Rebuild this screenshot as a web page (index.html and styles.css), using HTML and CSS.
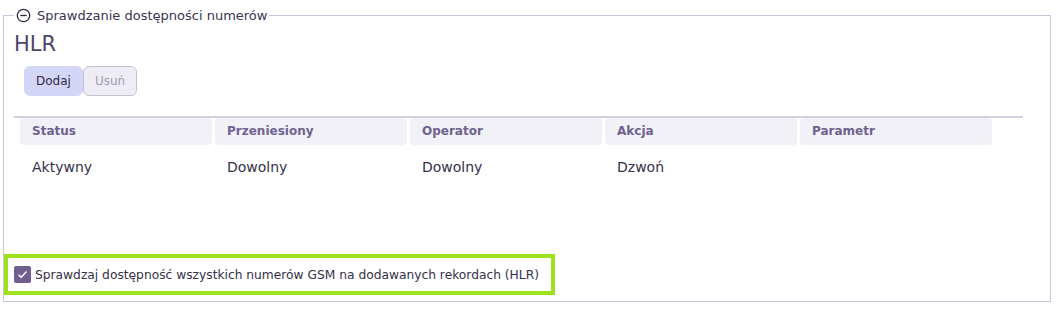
FILE: index.html
```html
<!DOCTYPE html>
<html lang="pl">

<head>
	<meta charset="UTF-8">
	<title>HLR</title>
	<link rel="stylesheet" href="styles.css">
</head>

<body>
	<fieldset class="panel">
		<legend>
			<svg class="toggle" width="15" height="15" viewBox="0 0 16 16">
				<circle cx="8" cy="8" r="6.6" fill="none" stroke="#2e2840" stroke-width="1.4"/>
				<line x1="4.6" y1="8" x2="11.4" y2="8" stroke="#2e2840" stroke-width="1.4"/>
			</svg>
			Sprawdzanie dostępności numerów
		</legend>

		<h3>HLR</h3>

		<div class="btns">
			<button class="btn add">Dodaj</button>
			<button class="btn del">Usuń</button>
		</div>

		<!-- tabela regul -->
		<div class="table">
			<div class="head">
				<div>Status</div>
				<div>Przeniesiony</div>
				<div>Operator</div>
				<div>Akcja</div>
				<div>Parametr</div>
			</div>
			<div class="row">
				<div>Aktywny</div>
				<div>Dowolny</div>
				<div>Dowolny</div>
				<div>Dzwoń</div>
				<div></div>
			</div>
		</div>

		<label class="check">
			<span class="box">
				<svg width="11" height="9" viewBox="0 0 11 9">
					<polyline points="1.5,4.8 4.2,7.3 9.5,1.6" fill="none" stroke="#fff" stroke-width="1.4"/>
				</svg>
			</span>
			Sprawdzaj dostępność wszystkich numerów GSM na dodawanych rekordach (HLR)
		</label>
	</fieldset>
</body>

</html>
```

FILE: styles.css
```css
body {
	margin: 0;
	padding: 0;
	background-color: #FFF;
	font-family: "DejaVu Sans", sans-serif;
	color: #35304a;
}

.panel {
	margin: 8px 6px 7px 3px;
	padding: 0 10px 6px 10px;
	border: 1px solid #c9c6dc;
}

.panel legend {
	display: flex;
	align-items: center;
	gap: 6px;
	padding: 0 2px;
	margin-left: 0;
	font-size: 13px;
	color: #3b3350;
}

.panel h3 {
	margin: 8px 0 0 0;
	font-size: 21px;
	font-weight: normal;
	color: #4e4668;
	line-height: 26px;
}

.btns {
	display: flex;
	margin: 9px 0 0 10px;
}

.btn {
	height: 30px;
	padding: 0 11px;
	border-radius: 6px;
	font-family: inherit;
	font-size: 12px;
}

.btn.add {
	background-color: #d4d6f8;
	border: 1px solid #d4d6f8;
	color: #2e2840;
}

.btn.del {
	background-color: #eeedf5;
	border: 1px solid #c4c2cf;
	color: #a09cb2;
}

.table {
	margin-top: 20px;
	width: 1009px;
	border-top: 2px solid #d3d0df;
}

.head,
.row {
	display: grid;
	grid-template-columns: repeat(5, 192px);
	column-gap: 3px;
	padding-left: 6px;
}

.head div {
	height: 27px;
	line-height: 27px;
	padding-left: 12px;
	background-color: #f2f1f7;
	border-radius: 4px;
	font-size: 12px;
	font-weight: bold;
	color: #6e6290;
}

.row div {
	height: 44px;
	line-height: 44px;
	padding-left: 12px;
	font-size: 14px;
	color: #35304a;
}

.check {
	display: flex;
	align-items: center;
	gap: 4px;
	box-sizing: border-box;
	width: 551px;
	height: 41px;
	margin: 65px 0 0 -10px;
	padding-left: 6px;
	border: 4px solid #9de21c;
	font-size: 12.25px;
	color: #35304a;
}

.check .box {
	display: flex;
	align-items: center;
	justify-content: center;
	width: 17px;
	height: 17px;
	border-radius: 2px;
	background-color: #6e5f8e;
}
```
